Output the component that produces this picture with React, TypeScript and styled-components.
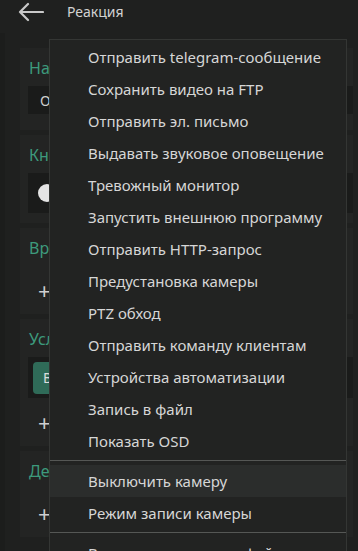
import React from "react";
import styled, { createGlobalStyle } from "styled-components";

const GlobalStyle = createGlobalStyle`
  html, body {
    margin: 0;
    padding: 0;
    background: #1c1d1c;
    font-family: "Noto Sans", "Open Sans", sans-serif;
    overflow: hidden;
  }
`;

const Page = styled.div`
  position: relative;
  width: 358px;
  height: 551px;
  overflow: hidden;
  background: #1c1d1c;
`;

const Header = styled.div`
  display: flex;
  align-items: center;
  height: 23px;
  padding: 0 0 10px 18px;
  background: #1f201f;
  gap: 23px;
`;

const Title = styled.span`
  font-size: 14px;
  color: #d2d2d2;
`;

const Body = styled.div`
  margin-left: 5px;
  padding: 15px 5px 0 15px;
  background: #1f201f;
  display: flex;
  flex-direction: column;
  gap: 5px;
  height: 100%;
`;

const Card = styled.div<{ $pb: number }>`
  background: #232423;
  padding: 10px 0 ${(p) => p.$pb}px 8px;
  display: flex;
  flex-direction: column;
`;

const Label = styled.div`
  height: 20px;
  line-height: 20px;
  margin: 0 0 8px 1px;
  font-size: 16px;
  color: #3d9a7c;
  white-space: nowrap;
`;

const Field = styled.div`
  height: 28px;
  display: flex;
  align-items: center;
  padding-left: 12px;
  background: #1a1b1a;
  font-size: 14px;
  color: #cfcfcf;
`;

const ToggleBox = styled.div`
  height: 40px;
  display: flex;
  align-items: center;
  padding-left: 10px;
  background: #1a1b1a;
`;

const Knob = styled.div`
  width: 18px;
  height: 18px;
  border-radius: 50%;
  background: #e4e4e4;
`;

const ChipBox = styled.div`
  height: 41px;
  display: flex;
  align-items: center;
  padding-left: 5px;
  background: #1a1b1a;
`;

const Chip = styled.div`
  height: 32px;
  padding: 0 10px;
  display: flex;
  align-items: center;
  border-radius: 4px;
  background: #2f6b58;
  font-size: 14px;
  color: #dcdcdc;
`;

const AddRow = styled.div`
  height: 48px;
  display: flex;
  align-items: center;
  padding-left: 10px;
  font-size: 22px;
  color: #cfcfcf;
`;

const Menu = styled.div`
  position: absolute;
  left: 49px;
  top: 39px;
  width: 296px;
  padding: 1px 0;
  background: #222322;
  border: 1px solid #343634;
  display: flex;
  flex-direction: column;
`;

const Item = styled.div<{ $active?: boolean }>`
  height: 32px;
  display: flex;
  align-items: center;
  padding-left: 38px;
  font-size: 15px;
  color: #d6d6d6;
  white-space: nowrap;
  background: ${(p) => (p.$active ? "#2b2d2c" : "transparent")};
`;

const Divider = styled.div`
  height: 1px;
  margin: 3px 0 4px;
  background: #555755;
`;

const BackArrow = () => (
  <svg width="26" height="20" viewBox="0 0 26 20" fill="none">
    <path
      d="M25 10H2M10 2L2 10L10 18"
      stroke="#c9c9c9"
      strokeWidth="2.2"
      strokeLinecap="round"
      strokeLinejoin="round"
    />
  </svg>
);

const groupA = [
  "Отправить telegram-сообщение",
  "Сохранить видео на FTP",
  "Отправить эл. письмо",
  "Выдавать звуковое оповещение",
  "Тревожный монитор",
  "Запустить внешнюю программу",
  "Отправить HTTP-запрос",
  "Предустановка камеры",
  "PTZ обход",
  "Отправить команду клиентам",
  "Устройства автоматизации",
  "Запись в файл",
  "Показать OSD",
];

export default function App() {
  return (
    <Page>
      <GlobalStyle />
      <Header>
        <BackArrow />
        <Title>Реакция</Title>
      </Header>
      <Body>
        <Card $pb={16}>
          <Label>Название</Label>
          <Field>Обнаружение движения</Field>
        </Card>
        <Card $pb={10}>
          <Label>Кнопка</Label>
          <ToggleBox>
            <Knob />
          </ToggleBox>
        </Card>
        <Card $pb={0}>
          <Label>Время</Label>
          <AddRow>+</AddRow>
        </Card>
        <Card $pb={0}>
          <Label>Условия</Label>
          <ChipBox>
            <Chip>Все</Chip>
          </ChipBox>
          <AddRow>+</AddRow>
        </Card>
        <Card $pb={0}>
          <Label>Действия</Label>
          <AddRow>+</AddRow>
        </Card>
      </Body>
      <Menu>
        {groupA.map((t) => (
          <Item key={t}>{t}</Item>
        ))}
        <Divider />
        <Item $active>Выключить камеру</Item>
        <Item>Режим записи камеры</Item>
        <Divider />
        <Item>Воспроизвести аудиофайл</Item>
      </Menu>
    </Page>
  );
}
